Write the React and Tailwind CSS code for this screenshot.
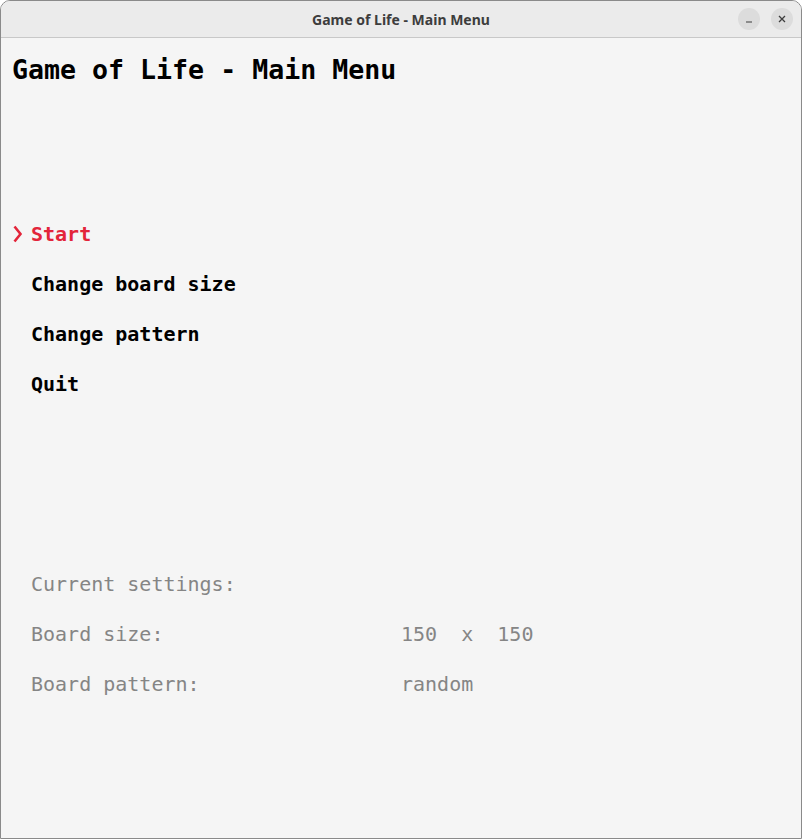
import React from "react";

const mono = { fontFamily: '"DejaVu Sans Mono", "Liberation Mono", monospace' };

function Row({ children, className = "" }) {
  return (
    <div
      className={`h-[50px] flex items-center whitespace-pre text-[20px] leading-none ${className}`}
    >
      {children}
    </div>
  );
}

function Chevron() {
  return (
    <svg width="19" height="18" viewBox="0 0 19 18" className="shrink-0">
      <path d="M2.5 1.5L8.5 9L2.5 16.5" fill="none" stroke="#e3253a" strokeWidth="2.6" />
    </svg>
  );
}

export default function App() {
  return (
    <div className="w-[802px] h-[839px] bg-[#f5f5f5] border border-[#8a8a8a] rounded-t-[10px] overflow-hidden flex flex-col">
      {/* TITLE BAR */}
      <div className="h-[37px] shrink-0 bg-[#ebebeb] border-b border-[#c8c8c8] relative flex items-center justify-center">
        <span
          className="text-[14px] font-bold text-[#3d3d3d]"
          style={{ fontFamily: '"Noto Sans", "Open Sans", sans-serif' }}
        >
          Game of Life - Main Menu
        </span>
        <div className="absolute right-[8px] top-[7px] flex gap-[11px]">
          <button className="w-[22px] h-[22px] rounded-full bg-[#dcdcdc] flex items-center justify-center">
            <svg width="10" height="10" viewBox="0 0 10 10">
              <path d="M2 8h6" stroke="#3d3d3d" strokeWidth="1.2" />
            </svg>
          </button>
          <button className="w-[22px] h-[22px] rounded-full bg-[#dcdcdc] flex items-center justify-center">
            <svg width="10" height="10" viewBox="0 0 10 10">
              <path d="M2 2l6 6M8 2l-6 6" stroke="#3d3d3d" strokeWidth="1.3" />
            </svg>
          </button>
        </div>
      </div>

      {/* CONTENT */}
      <div className="flex-1 pl-[11px]" style={mono}>
        <div className="h-[65px] flex items-center text-[26.6px] leading-none text-black font-bold">
          Game of Life - Main Menu
        </div>

        <div className="mt-[106px]">
          <Row className="text-[#e3253a] font-bold">
            <Chevron />
            Start
          </Row>
          <Row className="text-black font-bold pl-[19px]">Change board size</Row>
          <Row className="text-black font-bold pl-[19px]">Change pattern</Row>
          <Row className="text-black font-bold pl-[19px]">Quit</Row>
        </div>

        <div className="mt-[150px] text-[#858585] pl-[19px]">
          <Row>Current settings:</Row>
          <Row>
            <span className="w-[370px] shrink-0">Board size:</span>
            {"150  x  150"}
          </Row>
          <Row>
            <span className="w-[370px] shrink-0">Board pattern:</span>
            random
          </Row>
        </div>
      </div>
    </div>
  );
}
